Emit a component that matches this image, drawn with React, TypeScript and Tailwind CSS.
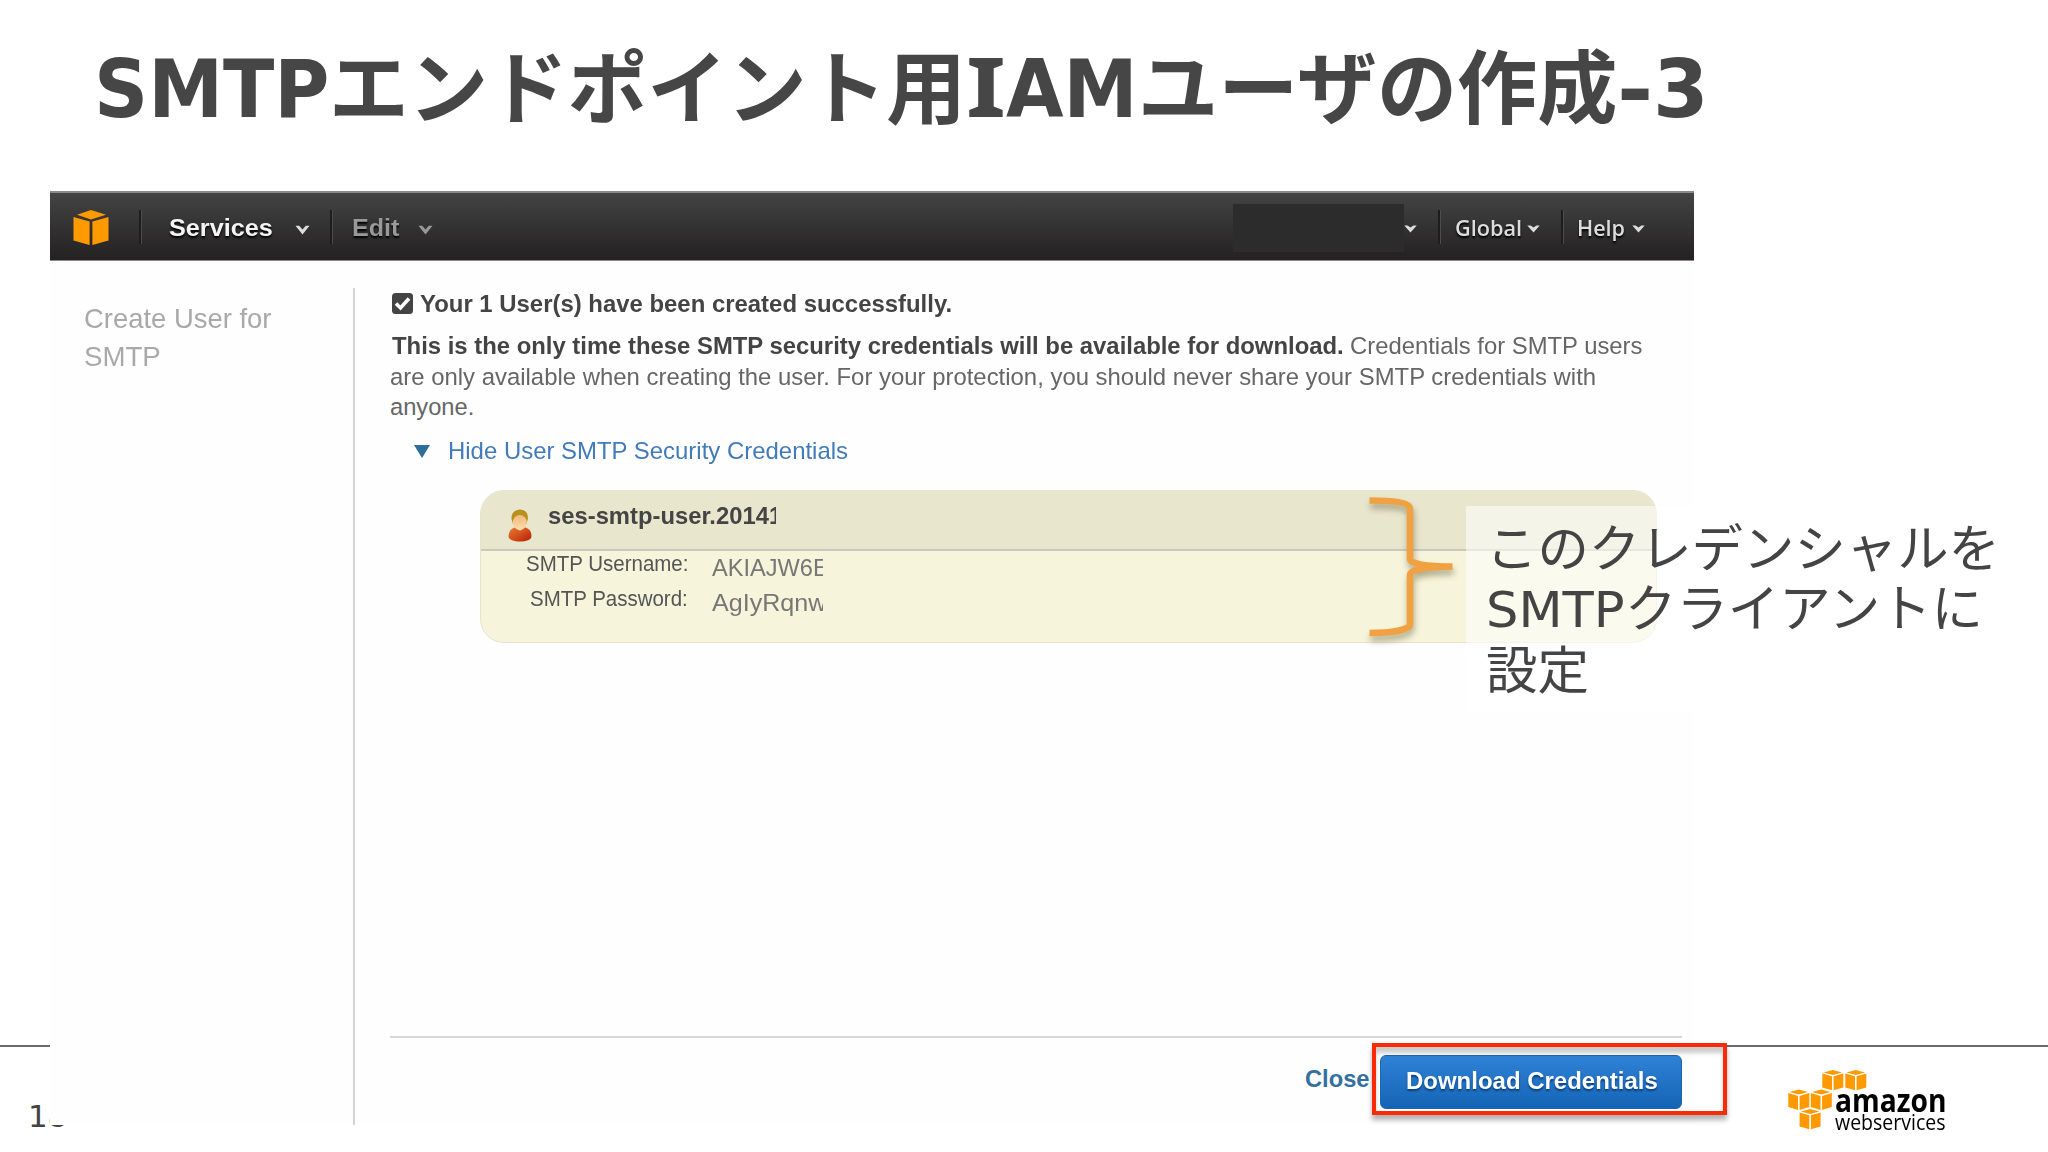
import { useLayoutEffect, useRef, useState } from 'react';
import clsx from 'clsx';

type FitTextProps = {
  children: string;
  width: number;
  className?: string;
};

// Squeezes or stretches a single run of text to a fixed width
function FitText({ children, width, className }: FitTextProps) {
  const ref = useRef<HTMLSpanElement>(null);
  const [scale, setScale] = useState(1);

  useLayoutEffect(() => {
    if (!ref.current) return;
    setScale(width / ref.current.offsetWidth);
  }, [width, children]);

  return (
    <span className={clsx('inline-block whitespace-nowrap', className)} style={{ width }}>
      <span ref={ref} className="inline-block origin-left" style={{ transform: `scaleX(${scale})` }}>
        {children}
      </span>
    </span>
  );
}

function Chevron({ className }: { className?: string }) {
  return (
    <svg width="15" height="10" viewBox="0 0 15 10" className={className}>
      <path d="M0.5 0.8H4.2L7.5 4.4L10.8 0.8H14.5L7.5 9.4Z" fill="currentColor" />
    </svg>
  );
}

function Caret({ className }: { className?: string }) {
  return (
    <svg width="13" height="8" viewBox="0 0 13 8" className={className}>
      <path d="M0.3 0.6H3.6L6.5 2.4L9.4 0.6H12.7L6.5 7.6Z" fill="currentColor" />
    </svg>
  );
}

function NavDivider() {
  return <div className="h-[34px] w-[3px] shrink-0 border-r border-[#4c4c4c] bg-[#1d1d1d]" />;
}

function NavBar() {
  return (
    <nav className="flex h-[70px] items-center border-t-2 border-b border-t-[#8a8a8a] border-b-[#8a8a8a] bg-linear-to-b from-[#444444] to-[#232122] font-['Liberation_Sans'] text-[24px] leading-[30px] font-bold">
      <svg width="36" height="35" viewBox="0 0 36 35" className="mt-[1px] ml-[23px] shrink-0">
        <g fill="#ff9900">
          <path d="M18 0L33 4.8L18 9.6L4 4.8Z" />
          <path d="M0.5 7L16.6 11.6V35L0.5 30.4Z" />
          <path d="M35.5 7L19.4 11.6V35L35.5 30.4Z" />
        </g>
      </svg>
      <div className="ml-[30px]">
        <NavDivider />
      </div>
      <FitText width={104} className="mt-[2px] ml-[27px] text-[#f4f4f4] [text-shadow:0_2px_2px_#000]">
        Services
      </FitText>
      <Chevron className="mt-[6px] ml-[22px] text-[#dddddd]" />
      <div className="ml-[20px]">
        <NavDivider />
      </div>
      <FitText width={47} className="mt-[2px] ml-[19px] text-[#999999] [text-shadow:0_2px_2px_#000]">
        Edit
      </FitText>
      <Chevron className="mt-[6px] ml-[19px] text-[#999999]" />
      <div className="ml-auto flex items-center font-['Open_Sans'] text-[22px] font-semibold text-[#dddddd]">
        <div className="mt-[2px] h-[48px] w-[171px] bg-[#2d2c2d]" />
        <Caret className="mt-[4px]" />
        <div className="ml-[21px]">
          <NavDivider />
        </div>
        <FitText width={67} className="ml-[14px] [text-shadow:0_2px_2px_#000]">
          Global
        </FitText>
        <Caret className="mt-[4px] ml-[5px]" />
        <div className="ml-[21px]">
          <NavDivider />
        </div>
        <FitText width={48} className="ml-[13px] [text-shadow:0_2px_2px_#000]">
          Help
        </FitText>
        <Caret className="mt-[4px] mr-[49px] ml-[7px]" />
      </div>
    </nav>
  );
}

function UserIcon() {
  return (
    <svg width="24" height="33" viewBox="0 0 24 33" className="mt-[18px] ml-[27px] shrink-0">
      <defs>
        <linearGradient id="shirt" x1="0" y1="0" x2="1" y2="1">
          <stop offset="0" stopColor="#e9793a" />
          <stop offset="0.5" stopColor="#d4501c" />
          <stop offset="1" stopColor="#b01d08" />
        </linearGradient>
        <linearGradient id="face" x1="0" y1="0" x2="0" y2="1">
          <stop offset="0" stopColor="#f3b877" />
          <stop offset="1" stopColor="#fbdcae" />
        </linearGradient>
      </defs>
      <path d="M0.500 27C1 21 5 17.5 12 17.5S23.500 21 23.500 27C23.500 31 18 32.500 12 32.500S0.500 31 0.500 27Z" fill="url(#shirt)" />
      <path d="M8 18L12 22L16 18Z" fill="#f0d2ae" />
      <path d="M3.500 10C3 4 7 0.500 12 0.500S20.500 4 19.800 10L18.500 15H5Z" fill="#b8901f" />
      <ellipse cx="11.800" cy="13.500" rx="7" ry="7.500" fill="url(#face)" />
    </svg>
  );
}

const credentials = [
  { label: 'SMTP Username:', labelWidth: 162, value: 'AKIAJW6E', valueWidth: 117 },
  { label: 'SMTP Password:', labelWidth: 158, value: 'AgIyRqnw', valueWidth: 114 }
];

function CredentialsCard() {
  return (
    <div className="mt-[24px] ml-[90px] h-[153px] w-[1177px] overflow-hidden rounded-[24px] border border-[#e6e4cb] bg-[#f6f4da]">
      <div className="flex h-[60px] border-b-2 border-[#cbc8bb] bg-[#e9e6ce]">
        <UserIcon />
        <div className="mt-[10px] ml-[16px] w-[228px] overflow-hidden text-[24px] leading-[30px] font-bold text-[#444444]">
          <FitText width={234}>ses-smtp-user.20141</FitText>
        </div>
      </div>
      {credentials.map((item) => (
        <div key={item.label} className="flex h-[34.500px] leading-[26px]">
          <div className="flex w-[207px] justify-end text-[21.500px] text-[#555555]">
            <FitText width={item.labelWidth}>{item.label}</FitText>
          </div>
          <div className="mt-[4px] ml-[24px] h-[30px] w-[111px] overflow-hidden text-[24px] text-[#777777]">
            <FitText width={item.valueWidth}>{item.value}</FitText>
          </div>
        </div>
      ))}
    </div>
  );
}

function Console() {
  return (
    <section className="relative ml-[50px] flex h-[934px] w-[1644px] flex-col bg-[#fefefe] font-['Liberation_Sans']">
      <NavBar />
      <div className="flex flex-1">
        <aside className="mt-[27px] flex w-[305px] shrink-0 flex-col border-r-2 border-[#d4d3d6] pt-[12px] pl-[34px] text-[28px] leading-[37.500px] text-[#a9a9a9]">
          <FitText width={187}>Create User for</FitText>
          <FitText width={77}>SMTP</FitText>
        </aside>
        <main className="flex w-[1292px] shrink-0 flex-col pt-[28px] pl-[35px] text-[23.700px]">
          <div className="flex h-[42px] text-[#444444]">
            <svg width="21" height="21" viewBox="0 0 21 21" className="mt-[4px] ml-[2px]">
              <rect width="21" height="21" rx="3.500" fill="#444444" />
              <path d="M4 10.500L8.500 15L17 5.500" fill="none" stroke="#ffffff" strokeWidth="3.600" />
            </svg>
            <FitText width={532} className="ml-[7px] leading-[30px] font-bold">
              Your 1 User(s) have been created successfully.
            </FitText>
          </div>
          <p className="flex w-[1270px] flex-col leading-[30.700px] text-[#666666]">
            <span className="flex gap-[6px]">
              <FitText width={952} className="ml-[2px] font-bold text-[#444444]">
                This is the only time these SMTP security credentials will be available for download.
              </FitText>
              <FitText width={293}>Credentials for SMTP users</FitText>
            </span>
            <FitText width={1206}>
              are only available when creating the user. For your protection, you should never share your SMTP credentials with
            </FitText>
            <FitText width={84}>anyone.</FitText>
          </p>
          <div className="mt-[13px] flex items-center text-[24px] leading-[30px] text-[#417bb9]">
            <svg width="16" height="13" viewBox="0 0 16 13" className="ml-[24px]">
              <path d="M0 0H16L8 13Z" fill="#2f6d9c" />
            </svg>
            <FitText width={400} className="ml-[18px]">
              Hide User SMTP Security Credentials
            </FitText>
          </div>
          <CredentialsCard />
          <div className="mt-auto flex h-[89px] w-[1292px] border-t-2 border-[#d8d6dc] font-bold">
            <FitText width={65} className="mt-[26px] ml-[915px] leading-[30px] text-[#34709f]">
              Close
            </FitText>
            <button className="mt-[17px] ml-[10px] flex h-[54px] w-[302px] items-center justify-center rounded-[6px] border border-[#1c66b0] bg-linear-to-b from-[#2f82d6] to-[#1464b6] pr-[2px] pb-[2px] text-white [text-shadow:0_2px_2px_#0a3f7a]">
              <FitText width={252} className="leading-[30px]">
                Download Credentials
              </FitText>
            </button>
          </div>
        </main>
      </div>
    </section>
  );
}

function Bracket() {
  return (
    <svg
      width="100"
      height="160"
      viewBox="0 0 100 160"
      className="absolute top-[490px] left-[1360px] drop-shadow-[1px_5px_3px_rgba(90,80,40,0.45)]"
    >
      <path
        d="M9.500 10.500C32 10.500 50 12 50 19V69C50 74 66 76.500 92.500 76.500C66 77 50 79 50 85V134C50 140 32 143 9.500 143"
        fill="none"
        stroke="#f0a142"
        strokeWidth="6.500"
      />
    </svg>
  );
}

function Callout() {
  return (
    <div className="absolute top-[506px] left-[1466px] flex w-[582px] flex-col bg-white/55 pt-[11px] pb-[12px] pl-[20px] font-['Noto_Sans','Noto_Sans_CJK_JP',sans-serif] text-[51px] leading-[61px] text-[#444444]">
      <FitText width={514}>このクレデンシャルを</FitText>
      <span className="-mt-[1px] flex h-[62px] items-baseline">
        <FitText width={139} className="font-['DejaVu_Sans'] text-[50px]">
          SMTP
        </FitText>
        <FitText width={358}>クライアントに</FitText>
      </span>
      <FitText width={103}>設定</FitText>
    </div>
  );
}

const cubes = [
  { x: 34, y: 0 },
  { x: 57, y: 0 },
  { x: 0, y: 19.6 },
  { x: 22.5, y: 19.6 },
  { x: 11.3, y: 39 }
];

function AwsLogo() {
  return (
    <div className="flex">
      <svg width="80" height="60" viewBox="0 0 80 60">
        {cubes.map((cube) => (
          <g key={`${cube.x}-${cube.y}`} transform={`translate(${cube.x} ${cube.y})`} fill="#ff9900">
            <path d="M10.800 0L20 2.400L10.800 5L1.600 2.400Z" />
            <path d="M0.300 3.500L10 6.300V20.300L0.300 17.400Z" />
            <path d="M21.300 3.500L11.600 6.300V20.300L21.300 17.400Z" />
          </g>
        ))}
      </svg>
      <div className="-ml-[33px] flex flex-col pt-[12px] text-black">
        <FitText width={112} className="font-['Open_Sans'] text-[33px] leading-[36px] font-bold">
          amazon
        </FitText>
        <FitText width={111} className="-mt-[9px] font-['Open_Sans'] text-[22px] leading-[24px] font-medium">
          webservices
        </FitText>
      </div>
    </div>
  );
}

export default function App() {
  return (
    <div className="relative h-[1152px] w-[2048px] overflow-hidden bg-white">
      <footer className="absolute inset-x-0 top-[1045px] flex h-[107px] justify-between border-t-2 border-[#6a6a6a]">
        <span className="mt-[51px] ml-[28px] font-['DejaVu_Sans'] text-[31px] leading-[36px] text-[#444444]">18</span>
        <div className="mt-[23px] mr-[101px]">
          <AwsLogo />
        </div>
      </footer>
      <h1 className="flex h-[191px] items-baseline pt-[25px] pl-[94px] font-['Noto_Sans','Noto_Sans_CJK_JP',sans-serif] text-[80px] leading-[120px] font-bold text-[#464646]">
        <FitText width={235} className="font-['DejaVu_Sans']">
          SMTP
        </FitText>
        <FitText width={637}>エンドポイント用</FitText>
        <FitText width={40} className="text-[82px]">
          I
        </FitText>
        <FitText width={132} className="font-['DejaVu_Sans']">
          AM
        </FitText>
        <FitText width={479}>ユーザの作成</FitText>
        <FitText width={36} className="font-['DejaVu_Sans']">
          -
        </FitText>
        <FitText width={56} className="font-['DejaVu_Sans']">
          3
        </FitText>
      </h1>
      <Console />
      <Bracket />
      <Callout />
      <div className="absolute top-[1043px] left-[1372px] h-[72px] w-[355px] border-[4px] border-[#f92b06] shadow-[0_5px_5px_rgba(0,0,0,0.3),inset_0_6px_4px_rgba(0,0,0,0.2)]" />
    </div>
  );
}
